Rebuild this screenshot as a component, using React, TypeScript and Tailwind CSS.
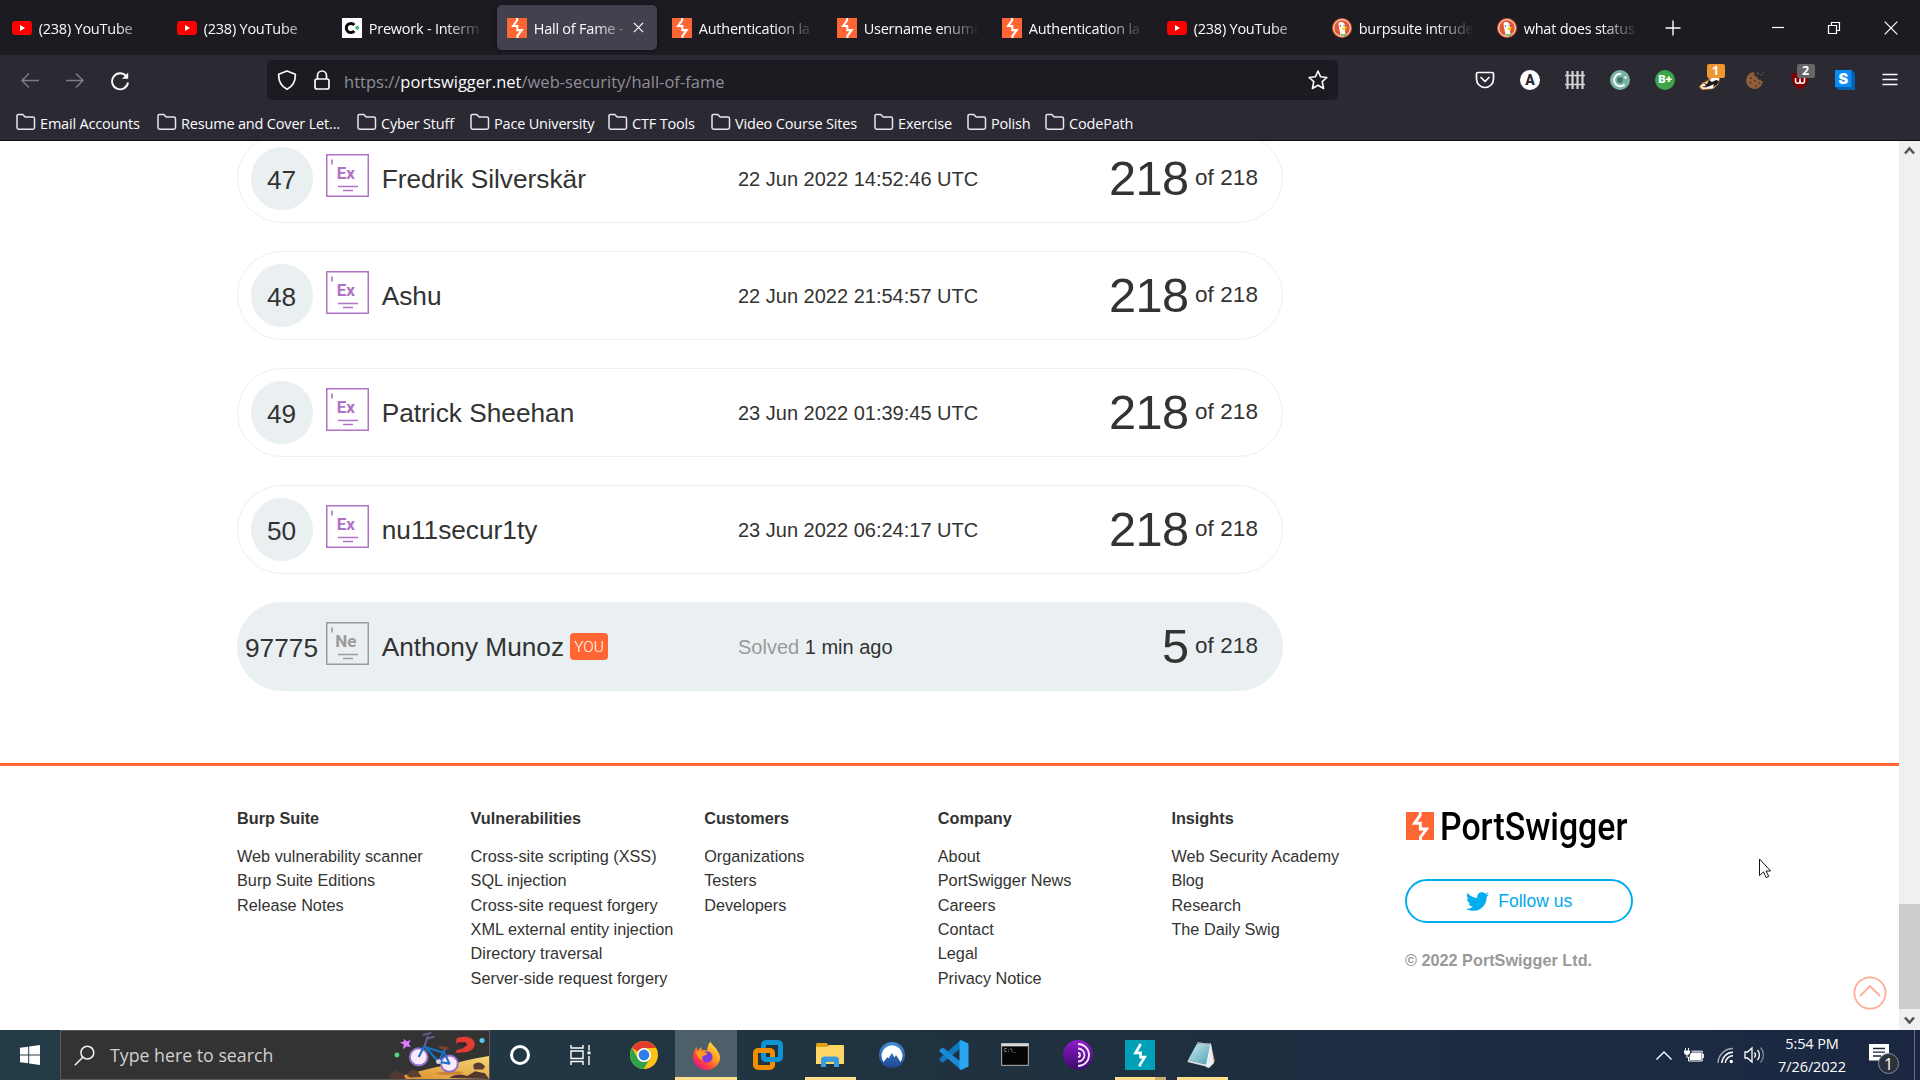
import type { ReactNode } from "react";
import { FaTwitter } from "react-icons/fa";

/* ---------- favicons ---------- */

function YouTubeIcon() {
  return (
    <svg viewBox="0 0 20 20" className="size-5 shrink-0">
      <rect x="0" y="3" width="20" height="14" rx="3.5" fill="#f00" />
      <path d="M8 7v6l5-3z" fill="#fff" />
    </svg>
  );
}

function CodePathIcon() {
  return (
    <svg viewBox="0 0 20 20" className="size-5 shrink-0">
      <rect width="20" height="20" fill="#fff" />
      <path d="M12.300 6.900A4.600 4.600 0 1 0 12.300 13.100" fill="none" stroke="#0b0b0b" strokeWidth="3" />
      <circle cx="15.200" cy="9.800" r="2" fill="#46b98a" />
    </svg>
  );
}

function Bolt({ bg, size, inset }: { bg: string; size: string; inset?: boolean }) {
  return (
    <svg viewBox="0 0 28 28" className={`${size} shrink-0`}>
      <rect width="28" height="28" fill={bg} />
      {inset ? (
        <path d="M14 3.500V5L9.800 12h4.700v4h3.900L14 23v1.800" fill="none" stroke="#fff" strokeWidth="2.500" />
      ) : (
        <path d="M14.200 0v3.200L8.500 11.300h5.900v5.700h6.200L14.600 25v3" fill="none" stroke="#fff" strokeWidth="2.900" />
      )}
    </svg>
  );
}

function DuckIcon() {
  return (
    <svg viewBox="0 0 20 20" className="size-5 shrink-0">
      <circle cx="10" cy="10" r="10" fill="#de5833" />
      <circle cx="10" cy="10" r="8.300" fill="none" stroke="#fff" strokeWidth="0.900" />
      <path d="M6.500 6.200C6.300 4.500 8 3.600 9.700 4c2.400.5 3.300 2 3.300 4.200 0 2.500-.4 4 .2 5.800.4 1.400.4 2.600.2 3.500-1.600.7-3.400.8-4.800.4C8.300 15 7 9.500 6.500 6.200z" fill="#fff" />
      <circle cx="8.500" cy="8" r="0.800" fill="#2d4f8e" />
      <circle cx="12" cy="7.600" r="0.700" fill="#2d4f8e" />
      <path d="M10.200 9.800c1.600-.8 3.800-.8 5-.4-.6.900-2 1.100-2.600 1.400.9.200 1.600.2 2 .4-1.100 1-4 .9-4.400 0z" fill="#fdd20a" />
      <path d="M9 15.500l2.500 1 2.600-1v3l-2.600-.7-2.300.8z" fill="#65bc46" />
    </svg>
  );
}

/* ---------- tab strip ---------- */

type Tab = { icon: ReactNode; title: string; active?: boolean };

const tabs: Tab[] = [
  { icon: <YouTubeIcon />, title: "(238) YouTube" },
  { icon: <YouTubeIcon />, title: "(238) YouTube" },
  { icon: <CodePathIcon />, title: "Prework - Interm" },
  { icon: <Bolt bg="#ff6633" size="size-5" />, title: "Hall of Fame -", active: true },
  { icon: <Bolt bg="#ff6633" size="size-5" />, title: "Authentication la" },
  { icon: <Bolt bg="#ff6633" size="size-5" />, title: "Username enume" },
  { icon: <Bolt bg="#ff6633" size="size-5" />, title: "Authentication la" },
  { icon: <YouTubeIcon />, title: "(238) YouTube" },
  { icon: <DuckIcon />, title: "burpsuite intrude" },
  { icon: <DuckIcon />, title: "what does status" },
];

function TabStrip() {
  return (
    <div className="flex h-[55px] shrink-0 items-center bg-[#1c1b22] pl-[2.200px] text-[#fbfbfe]">
      <div className="flex gap-[5px]">
        {tabs.map((t, i) => (
          <div
            key={i}
            className={`flex h-[45px] w-[160px] items-center rounded-[5px] pl-[10px] pr-[8px] ${t.active ? "bg-[#42414d] shadow-[0_0_4px_rgba(0,0,0,0.5)]" : ""}`}
          >
            {t.icon}
            <div className="ml-[6.500px] flex-1 overflow-hidden whitespace-nowrap pt-[2px] text-[14.500px] tracking-[-0.230px] [mask-image:linear-gradient(to_left,transparent,#000_38px)]">
              {t.title}
            </div>
            {t.active && (
              <svg viewBox="0 0 12 12" className="mr-[5px] size-[11px]" stroke="#fbfbfe" strokeWidth="1.300">
                <path d="M1 1l10 10M11 1L1 11" />
              </svg>
            )}
          </div>
        ))}
      </div>
      <svg viewBox="0 0 16 16" className="ml-[18px] size-4" stroke="#fbfbfe" strokeWidth="1.400">
        <path d="M8 .5v15M.5 8h15" />
      </svg>
      <div className="ml-auto flex pr-[0.700px]">
        <div className="flex w-[57px] justify-center">
          <svg viewBox="0 0 14 14" className="size-[14px]" stroke="#fff" strokeWidth="1.200">
            <path d="M1 6.500h12" />
          </svg>
        </div>
        <div className="flex w-[56px] justify-center">
          <svg viewBox="0 0 14 14" className="size-[14px]" stroke="#fff" strokeWidth="1.200" fill="none">
            <path d="M1.500 4.500h8v8h-8zM4.500 4.500v-3h8v8h-3" />
          </svg>
        </div>
        <div className="flex w-[57px] justify-center">
          <svg viewBox="0 0 14 14" className="size-[14px]" stroke="#fff" strokeWidth="1.200">
            <path d="M.7.7l12.600 12.600M13.300.7L.7 13.300" />
          </svg>
        </div>
      </div>
    </div>
  );
}

/* ---------- navigation toolbar ---------- */

function Cell({ children }: { children: ReactNode }) {
  return <div className="relative flex h-[50px] w-[45px] items-center justify-center">{children}</div>;
}

function CountBadge({ n, color }: { n: string; color: string }) {
  return (
    <span className={`absolute left-[19px] top-[9px] flex h-[14px] w-[18px] items-center justify-center rounded-[2px] font-['Open_Sans'] text-[12.500px] font-bold leading-none text-white ${color}`}>
      {n}
    </span>
  );
}

function NavBar() {
  return (
    <div className="flex h-[50px] shrink-0 items-center bg-[#2b2a33] pl-[7.500px] pr-[7.500px]">
      <Cell>
        <svg viewBox="0 0 20 20" className="size-5" fill="none" stroke="#7d7c84" strokeWidth="1.500">
          <path d="M19 10.500H2M9 3.500l-7 7 7 7" />
        </svg>
      </Cell>
      <Cell>
        <svg viewBox="0 0 20 20" className="size-5" fill="none" stroke="#7d7c84" strokeWidth="1.500">
          <path d="M1 10.500h17M11 3.500l7 7-7 7" />
        </svg>
      </Cell>
      <Cell>
        <svg viewBox="0 0 20 20" className="mt-px size-5" fill="none" stroke="#fbfbfe" strokeWidth="1.900">
          <path d="M16.500 5.500A8 8 0 1 0 18 11.500" />
          <path d="M18.200 1.500v6.200H12z" fill="#fbfbfe" stroke="none" />
        </svg>
      </Cell>
      <div className="ml-[124.500px] flex h-10 w-[1071px] items-center rounded-[5px] bg-[#1c1b22] pl-[10px] pr-[10px]">
        <svg viewBox="0 0 20 20" className="size-5" fill="none" stroke="#fbfbfe" strokeWidth="1.700" strokeLinejoin="round">
          <path d="M10 1l8.300 3.200c.3 6.800-2 12-8.300 15-6.300-3-8.600-8.200-8.300-15z" />
        </svg>
        <svg viewBox="0 0 20 20" className="ml-[15px] size-5" fill="none" stroke="#fbfbfe" strokeWidth="1.700">
          <rect x="3" y="9" width="14" height="10" rx="2" />
          <path d="M5.500 9V5.500a4.500 4.500 0 0 1 9 0V9" />
        </svg>
        <div className="ml-[12px] flex-1 pt-[5px] text-[16.500px] tracking-[0.010px] text-[#8f8f95]">
          https://<span className="text-[#fbfbfe]">portswigger.net</span>/web-security/hall-of-fame
        </div>
        <svg viewBox="0 0 20 20" className="size-5" fill="none" stroke="#fbfbfe" strokeWidth="1.600" strokeLinejoin="round">
          <path d="M10 1l2.600 5.800 6.300.7-4.700 4.200 1.400 6.800L10 15.200l-5.600 3.300 1.400-6.800L1.100 7.500l6.300-.7z" />
        </svg>
      </div>
      <div className="ml-auto flex">
        <Cell>
          <svg viewBox="0 0 20 20" className="size-5" fill="none" stroke="#fbfbfe" strokeWidth="1.700" strokeLinecap="round" strokeLinejoin="round">
            <path d="M3 2.500h14a1.500 1.500 0 0 1 1.500 1.500v5a8.500 8.500 0 0 1-17 0V4A1.500 1.500 0 0 1 3 2.500z" />
            <path d="M6 7.500l4 4 4-4" />
          </svg>
        </Cell>
        <Cell>
          <div className="flex size-5 items-center justify-center rounded-full bg-white font-['Roboto'] text-[14px] font-black leading-none text-[#2b2a33]">
            A
          </div>
        </Cell>
        <Cell>
          <svg viewBox="0 0 20 20" className="size-5" stroke="#d2d2d2">
            <path d="M2.500 1v18M7.500 1v18M12.500 1v18M17.500 1v18" strokeWidth="2.200" />
            <path d="M0 5.500h20M0 14.500h20" strokeWidth="1.500" />
          </svg>
        </Cell>
        <Cell>
          <svg viewBox="0 0 20 20" className="size-5" fill="none">
            <circle cx="10" cy="10" r="10" fill="#7bb5a3" />
            <path d="M10.500 3.800A6.200 6.200 0 1 0 14 15" stroke="#fff" strokeWidth="2" strokeLinecap="round" />
            <circle cx="10" cy="10" r="3" fill="#46786a" />
            <circle cx="15.500" cy="7.500" r="1.200" fill="#fff" />
          </svg>
        </Cell>
        <Cell>
          <div className="flex size-5 items-center justify-center rounded-full bg-[#3da449] font-['Roboto'] text-[11.500px] font-black leading-none text-white">
            B+
          </div>
        </Cell>
        <Cell>
          <svg viewBox="0 0 22 20" className="h-5 w-[22px]">
            <path d="M0 17l3-4 6-3 3-6h7l2 5-2 6-5 4-11 1z" fill="#d9812f" />
            <path d="M1 16.500l4-3 6-3 3-5h5l1 4-2 5-5 4-9 .5z" fill="#fff" />
            <path d="M5 13l3 1 2-4 3 2 4-2 3 1-2 4-4 2 1-3-4 2-3 1z" fill="#1b1b1b" />
            <path d="M2 17l5-1.500 1 2z" fill="#3a2a1c" />
          </svg>
          <CountBadge n="1" color="bg-[#ee9631]" />
        </Cell>
        <Cell>
          <svg viewBox="0 0 20 20" className="size-5">
            <path d="M9 2a8.500 8.500 0 1 0 9 9c-1.500.5-2.500-.5-2.500-1.500-2 .5-3.500-.5-3-2.500C10 7 9 4 9 2z" fill="#8d5f3c" />
            <g fill="#5b3820">
              <circle cx="6" cy="8" r="1.100" />
              <circle cx="10" cy="11" r="1.100" />
              <circle cx="5.500" cy="13" r="1" />
              <circle cx="11" cy="16" r="1" />
              <circle cx="14.500" cy="13" r="0.900" />
            </g>
            <g fill="#8d5f3c">
              <circle cx="13" cy="3.500" r="0.900" />
              <circle cx="16.500" cy="5" r="0.800" />
              <circle cx="18" cy="2.500" r="0.600" />
            </g>
          </svg>
        </Cell>
        <Cell>
          <svg viewBox="0 0 20 20" className="size-5">
            <path d="M10 1c3 2 6 2.500 8.500 2.500 0 7-.5 12-8.500 16C2 15.500 1.500 10.500 1.500 3.500 4 3.500 7 3 10 1z" fill="#800000" />
            <path d="M5.500 8v3a2.200 2.200 0 0 0 4.500 0V8.500M10 11a2.200 2.200 0 0 0 4.500 0V8" fill="none" stroke="#fff" strokeWidth="1.500" />
          </svg>
          <CountBadge n="2" color="bg-[#666]" />
        </Cell>
        <Cell>
          <svg viewBox="0 0 20 20" className="size-5">
            <path d="M16.500 0L20 3.500V20H3.500L0 16.500z" fill="#0561b0" />
            <rect width="16.500" height="17" fill="#0a8cf5" />
            <text x="8.300" y="13.600" textAnchor="middle" fontFamily="Inter, sans-serif" fontWeight="900" fontSize="14.500" fill="#fff">
              S
            </text>
          </svg>
        </Cell>
        <Cell>
          <svg viewBox="0 0 16 14" className="h-[14px] w-4" stroke="#fbfbfe" strokeWidth="1.500">
            <path d="M.5 1.500h15M.5 6.500h15M.5 11.500h15" />
          </svg>
        </Cell>
      </div>
    </div>
  );
}

/* ---------- bookmarks ---------- */

const bookmarks: [string, string][] = [
  ["Email Accounts", "w-[141px]"],
  ["Resume and Cover Let...", "w-[200px]"],
  ["Cyber Stuff", "w-[113px]"],
  ["Pace University", "w-[138px]"],
  ["CTF Tools", "w-[103px]"],
  ["Video Course Sites", "w-[163px]"],
  ["Exercise", "w-[93px]"],
  ["Polish", "w-[78px]"],
  ["CodePath", "w-[100px]"],
];

function BookmarksBar() {
  return (
    <div className="flex h-[36px] shrink-0 items-center border-b border-[#0c0c0d] bg-[#2b2a33] pl-[16px] text-[#fbfbfe]">
      {bookmarks.map(([name, w]) => (
        <div key={name} className={`flex items-center gap-[4px] whitespace-nowrap ${w}`}>
          <svg viewBox="0 0 20 18" className="-mt-px h-[18px] w-5 shrink-0" fill="none" stroke="#e6e6ea" strokeWidth="1.500" strokeLinejoin="round">
            <path d="M1 2.800A1.300 1.300 0 0 1 2.300 1.500h4.500l2.400 2.600h7.600a1.700 1.700 0 0 1 1.700 1.700v8.700a1.700 1.700 0 0 1-1.700 1.700H2.700A1.700 1.700 0 0 1 1 14.500z" />
          </svg>
          <span className="pt-[3px] text-[14.500px] tracking-[-0.180px]">{name}</span>
        </div>
      ))}
    </div>
  );
}

/* ---------- hall of fame ---------- */

function LevelBadge({ code, color }: { code: string; color: string }) {
  return (
    <svg viewBox="0 0 43 43" className="-mt-[6px] size-[43px] shrink-0">
      <rect x="0.750" y="0.750" width="41.500" height="41.500" fill="none" stroke={color} strokeWidth="1.500" />
      <path d="M6 5.500v5" stroke={color} strokeWidth="1.600" />
      <text x="19.800" y="24.800" textAnchor="middle" fontFamily="Roboto, sans-serif" fontWeight="700" fontSize="17" fill={color}>
        {code}
      </text>
      <path d="M12 32.500h20M17 36.500h10" stroke={color} strokeWidth="1.600" />
    </svg>
  );
}

type Entry = { rank: string; name: string; date: ReactNode; solved: string; you?: boolean };

const entries: Entry[] = [
  { rank: "47", name: "Fredrik Silverskär", date: "22 Jun 2022 14:52:46 UTC", solved: "218" },
  { rank: "48", name: "Ashu", date: "22 Jun 2022 21:54:57 UTC", solved: "218" },
  { rank: "49", name: "Patrick Sheehan", date: "23 Jun 2022 01:39:45 UTC", solved: "218" },
  { rank: "50", name: "nu11secur1ty", date: "23 Jun 2022 06:24:17 UTC", solved: "218" },
  {
    rank: "97775",
    name: "Anthony Munoz",
    date: (
      <>
        <span className="text-[#999]">Solved</span> 1 min ago
      </>
    ),
    solved: "5",
    you: true,
  },
];

function Row({ e }: { e: Entry }) {
  return (
    <div
      className={`flex h-[89px] w-[1046px] items-center rounded-full border border-[#eaf0f2] pl-[13px] pr-[24px] ${e.you ? "bg-[#eaf0f2]" : "bg-white"}`}
    >
      <div className="flex h-[63px] w-[62px] shrink-0 items-center justify-center rounded-full bg-[#eaf0f2] pr-px pt-[2px] text-[26.250px] leading-[30px]">
        {e.rank}
      </div>
      <div className="ml-[13px] flex w-[412px] shrink-0 items-center">
        <LevelBadge code={e.you ? "Ne" : "Ex"} color={e.you ? "#9b9b9b" : "#b072c6"} />
        <span className="ml-[12.700px] pt-px text-[26.250px] leading-[29px]">{e.name}</span>
        {e.you && (
          <span className="ml-[6px] flex h-[27px] w-[38px] items-center justify-center rounded-[4px] bg-[#ff6633] pt-[2px] font-['Roboto'] text-[15.500px] font-light leading-none text-white">
            YOU
          </span>
        )}
      </div>
      <div className="flex-1 whitespace-nowrap text-[20px]">{e.date}</div>
      <div className="flex items-center gap-[6.500px] pb-px">
        <span className="text-[48.750px] leading-none tracking-[-0.600px]">{e.solved}</span>
        <span className="text-[22.500px] tracking-[0.080px]">of 218</span>
      </div>
    </div>
  );
}

/* ---------- footer ---------- */

const columns: [string, string[]][] = [
  ["Burp Suite", ["Web vulnerability scanner", "Burp Suite Editions", "Release Notes"]],
  [
    "Vulnerabilities",
    [
      "Cross-site scripting (XSS)",
      "SQL injection",
      "Cross-site request forgery",
      "XML external entity injection",
      "Directory traversal",
      "Server-side request forgery",
    ],
  ],
  ["Customers", ["Organizations", "Testers", "Developers"]],
  ["Company", ["About", "PortSwigger News", "Careers", "Contact", "Legal", "Privacy Notice"]],
  ["Insights", ["Web Security Academy", "Blog", "Research", "The Daily Swig"]],
];

function Footer() {
  return (
    <footer className="relative mt-[72px] flex h-[267px] border-t-[3px] border-[#ff6633] pl-[237px] pt-[40px] text-[16.250px] leading-[24.400px]">
      {columns.map(([title, links]) => (
        <div key={title} className="w-[233.600px] whitespace-nowrap">
          <div className="mb-[13.300px] font-bold">{title}</div>
          {links.map((l) => (
            <div key={l}>{l}</div>
          ))}
        </div>
      ))}
      <div className="flex w-[228px] flex-col">
        <div className="mt-[6px] flex h-[30px] items-start pl-px">
          <Bolt bg="#ff6633" size="size-[28px]" />
          <span className="ml-[6.500px] mt-px origin-left scale-x-[0.868] whitespace-nowrap font-['Roboto'] text-[39px] font-medium leading-[28px] text-black">
            PortSwigger
          </span>
        </div>
        <div className="mt-[37px] flex h-[44px] items-center justify-center gap-[9.500px] rounded-full border-2 border-[#00aeef] text-[17.500px] text-[#00a8ea]">
          <FaTwitter className="size-[23px] text-[#00aeef]" />
          Follow us
        </div>
        <div className="mt-[25px] whitespace-nowrap font-bold text-[#999]">© 2022 PortSwigger Ltd.</div>
      </div>
      <svg viewBox="0 0 34 34" className="absolute right-[12px] top-[210px] size-[34px]" fill="none" stroke="#ffad94" strokeWidth="1.800">
        <circle cx="17" cy="17" r="15.600" />
        <path d="M7 20l10-10 10 10" />
      </svg>
      <svg viewBox="0 0 14 21" className="absolute left-[1758px] top-[92px] h-[21px] w-[14px]">
        <path d="M1.500 1v16.500l4-3.600 2.600 5.700 2.600-1.200-2.600-5.400h4.500z" fill="#fff" stroke="#111" strokeWidth="1" />
      </svg>
    </footer>
  );
}

function Scrollbar() {
  return (
    <div className="flex w-[21px] shrink-0 flex-col items-center bg-[#f0f0f0]">
      <svg viewBox="0 0 21 21" className="size-[21px]" fill="none" stroke="#555" strokeWidth="2.600">
        <path d="M6 12.500l4.500-5 4.500 5" />
      </svg>
      <div className="mt-auto h-[105px] w-full bg-[#cdcdcd]" />
      <svg viewBox="0 0 21 21" className="size-[21px]" fill="none" stroke="#555" strokeWidth="2.600">
        <path d="M6 8.500l4.500 5 4.500-5" />
      </svg>
    </div>
  );
}

/* ---------- taskbar ---------- */

function BikeArt() {
  return (
    <svg viewBox="0 0 100 50" className="ml-auto h-[48px] w-[99px]" preserveAspectRatio="none">
      <defs>
        <linearGradient id="sand" x1="0" x2="1" y1="1" y2="0">
          <stop offset="0" stopColor="#d98b2c" />
          <stop offset="1" stopColor="#f7d774" />
        </linearGradient>
      </defs>
      <path d="M0 48c20-2 30-7 45-10 20-4 35-9 55-12v24H0z" fill="url(#sand)" />
      <path d="M45 44c12-3 22-2 30-1-8 3-20 4-30 1z" fill="#b86a20" opacity=".6" />
      <path d="M0 46l5-5 8 3 3 6H0z" fill="#54382f" />
      <path d="M17 46c2-5 7-7 11-4l4 6-12 .5z" fill="#5d4034" />
      <path d="M84 36c2-4 8-5 12 1l-2 3H85z" fill="#5a3c31" />
      <path d="M60 49c6-5 13-4 18-2l8-5 10 2 4 6z" fill="#54382f" />
      <circle cx="29" cy="27" r="9" fill="#fbe9fa" stroke="#8b6fc9" strokeWidth="2" />
      <circle cx="60" cy="34" r="8.500" fill="#fbe9fa" stroke="#8b6fc9" strokeWidth="2" />
      <path d="M29 27l6-12M35 16l14 16 7-14M36 17l19 6 5 11-11-2" fill="none" stroke="#1673c8" strokeWidth="2.200" strokeLinejoin="round" />
      <path d="M35 15l3-9M34 4l7-2M38 8l6-2" fill="none" stroke="#6d5c96" strokeWidth="2" strokeLinecap="round" />
      <path d="M51 17l7 1" stroke="#7b3f2c" strokeWidth="3" strokeLinecap="round" />
      <circle cx="49" cy="32" r="2.500" fill="#d6d9e2" />
      <path d="M67 8c5-3 15-3 18 3 2 5-1 9-7 11l-11 1v-3l7-2 2-3-9-2z" fill="#e23d2e" />
      <path d="M68 12l8-.5 2 3-2 2-7-2z" fill="#3b2230" />
      <path d="M14 8l3 3 4-2-2 4 2 4-4-1-4 3 1-5-4-2 4-1z" fill="#e07bff" />
      <ellipse cx="7" cy="25" rx="2.500" ry="2.600" fill="#4cdb74" />
      <circle cx="93" cy="10" r="2.600" fill="#57c8f0" />
    </svg>
  );
}

function Chrome() {
  return (
    <svg viewBox="0 0 28 28" className="size-7">
      <circle cx="14" cy="14" r="14" fill="#fbc116" />
      <path d="M1.900 7A14 14 0 0 1 26.100 7H14a7 7 0 0 0-6 3.500z" fill="#e33b2e" />
      <path d="M1.900 7A14 14 0 0 0 13.500 28l6.500-10.500a7 7 0 0 1-12.200 0z" fill="#2ba24c" />
      <circle cx="14" cy="14" r="7" fill="#fff" />
      <circle cx="14" cy="14" r="5.400" fill="#2f7de9" />
    </svg>
  );
}

function Firefox() {
  return (
    <svg viewBox="0 0 30 30" className="size-[29px]">
      <defs>
        <linearGradient id="fox" x1="0.900" x2="0.200" y1="0.100" y2="0.950">
          <stop offset="0" stopColor="#ffe94a" />
          <stop offset="0.400" stopColor="#ff9a1f" />
          <stop offset="0.750" stopColor="#ff3f3f" />
          <stop offset="1" stopColor="#e01592" />
        </linearGradient>
      </defs>
      <path d="M19 .5c1 3 3.500 4 5 6.500 1 .2 1.500 1.500 1.800 2.500C28 12 29 15 29 17a14 13 0 0 1-28 0c0-4 1.500-8 4-11 0 2 .5 3 1 3.500C7.500 8 8.500 7 9.500 6.500c0 1.500.5 2.500 1.500 3 2-.5 3.500 0 4.500.5C16 6 17 3 19 .5z" fill="url(#fox)" />
      <circle cx="15.500" cy="16.500" r="5.800" fill="#7a3bd8" />
      <path d="M4 11c4-1.500 8 0 12 2-1 2-3.500 2-5 3-1 1-.5 3 1 4-4-.5-7-4-8-9z" fill="#ff9b20" />
    </svg>
  );
}

function VMware() {
  return (
    <svg viewBox="0 0 30 30" className="size-[30px]" fill="none" strokeWidth="5">
      <rect x="10.500" y="2.500" width="17" height="17" rx="2.500" stroke="#0f93d2" />
      <rect x="2.500" y="10.500" width="17" height="17" rx="2.500" stroke="#f28c00" />
      <path d="M10.500 13v4a2.500 2.500 0 0 0 2.500 2.500h9" stroke="#0f93d2" />
    </svg>
  );
}

function Explorer() {
  return (
    <svg viewBox="0 0 28 24" className="h-6 w-7">
      <path d="M0 1.500A1.500 1.500 0 0 1 1.500 0H11l2 4h-13z" fill="#e0a013" />
      <path d="M0 4h11l2-2h14a1 1 0 0 1 1 1v18H0z" fill="#ffd766" />
      <path d="M5 24v-8a3 3 0 0 1 3-2.500h12a3 3 0 0 1 3 2.500v8h-5v-5h-8v5z" fill="#3c9be0" />
    </svg>
  );
}

function NordVpn() {
  return (
    <svg viewBox="0 0 26 26" className="size-[26px]">
      <defs>
        <linearGradient id="nord" x1="0" x2="0" y1="0" y2="1">
          <stop offset="0" stopColor="#3f8fdc" />
          <stop offset="1" stopColor="#1f4690" />
        </linearGradient>
      </defs>
      <circle cx="13" cy="13" r="13" fill="url(#nord)" />
      <path d="M4.500 20A10.500 10.500 0 1 1 21.500 20l-4.500-7-1.500 2.500L13 11l-3.500 5.500L8.500 15z" fill="#fff" />
    </svg>
  );
}

function VsCode() {
  return (
    <svg viewBox="0 0 30 30" className="size-[30px]">
      <path d="M22 0v8L4 22.500.5 20.500v-2z" fill="#0f78be" />
      <path d="M22 30v-8L4 7.500.5 9.500v2z" fill="#1a8ad4" />
      <path d="M22 0l7.500 3.500v23L22 30l-1.500-1V1z" fill="#2aa5f4" />
    </svg>
  );
}

function Terminal() {
  return (
    <svg viewBox="0 0 28 23" className="mb-px mr-[2px] h-[23px] w-7">
      <rect width="28" height="23" fill="#9b9b9b" />
      <rect x="0.500" y="0.500" width="27" height="2.500" fill="#d9d9d9" />
      <rect x="1.200" y="3.500" width="25.600" height="18.300" fill="#050505" />
      <text x="3" y="9" fontFamily="'Liberation Mono', monospace" fontSize="5" fill="#ddd">
        C:\_
      </text>
    </svg>
  );
}

function Tor() {
  return (
    <svg viewBox="0 0 30 30" className="size-[30px]" fill="none">
      <defs>
        <linearGradient id="tor" x1="0" x2="0" y1="0" y2="1">
          <stop offset="0" stopColor="#8f1ccc" />
          <stop offset="1" stopColor="#3b0a68" />
        </linearGradient>
      </defs>
      <circle cx="15" cy="15" r="15" fill="url(#tor)" />
      <path d="M15 4a11 11 0 0 1 0 22M15 8.500a6.500 6.500 0 0 1 0 13M15 13a2 2 0 0 1 0 4" stroke="#f3e4fb" strokeWidth="1.800" />
    </svg>
  );
}

function Notepad() {
  return (
    <svg viewBox="0 0 28 28" className="mr-[2px] size-7">
      <defs>
        <linearGradient id="pad" x1="0" x2="1" y1="0" y2="1">
          <stop offset="0" stopColor="#cdeef3" />
          <stop offset="1" stopColor="#4f9fb2" />
        </linearGradient>
      </defs>
      <path d="M24 4l4 16-6 6z" fill="#b98b57" />
      <path d="M12 3l12-.5 3 19.500-5 5-3-1z" fill="#e9eef0" />
      <path d="M10 2.500L23 4.500l-4 19L1 19z" fill="url(#pad)" />
      <path d="M1 19l18 4.500v2L.5 21z" fill="#d8e2e5" />
      <path d="M10 2.500l13 2 .4-1.500L10.500 1z" fill="#a8b4b8" />
    </svg>
  );
}

type AppEntry = { icon: ReactNode; active?: boolean; open?: boolean; stacked?: boolean };

const apps: AppEntry[] = [
  { icon: <Chrome /> },
  { icon: <Firefox />, active: true },
  { icon: <VMware /> },
  { icon: <Explorer />, open: true },
  { icon: <NordVpn /> },
  { icon: <VsCode /> },
  { icon: <Terminal /> },
  { icon: <Tor /> },
  { icon: <Bolt bg="#00a0b8" size="size-[30px]" inset />, open: true, stacked: true },
  { icon: <Notepad />, open: true },
];

function Taskbar() {
  return (
    <div className="flex h-[50px] shrink-0 bg-[linear-gradient(90deg,#233c47_0%,#20323f_50%,#1d2c42_75%,#1b2741_100%)] text-white">
      <div className="flex w-[60px] items-center justify-center">
        <svg viewBox="0 0 20 20" className="size-5" fill="#fff">
          <path d="M0 2.800l8.200-1.100v7.800H0zM9.200 1.500L20 0v9.500H9.200zM0 10.500h8.200v7.800L0 17.200zM9.200 10.500H20V20L9.200 18.500z" />
        </svg>
      </div>
      <div className="flex w-[430px] items-center border border-[#5a5a5a] bg-[#333] pl-[13px]">
        <svg viewBox="0 0 22 22" className="size-[21px]" fill="none" stroke="#f2f2f2" strokeWidth="1.600">
          <circle cx="14" cy="8" r="6.700" />
          <path d="M9.200 12.800L.8 21.200" />
        </svg>
        <span className="ml-[15px] text-[17.750px] text-[#d0d0d0]">Type here to search</span>
        <BikeArt />
      </div>
      <div className="flex w-[59px] items-center justify-center">
        <div className="size-[20px] rounded-full border-[3px] border-white" />
      </div>
      <div className="flex w-[64px] items-center pl-[21px]">
        <svg viewBox="0 0 22 20" className="h-5 w-[22px]" fill="none" stroke="#fff" strokeWidth="1.400">
          <path d="M1 0v3h12V0M1 20v-3.500h12V20M1 6h12v7.500H1zM19 0v5.500M19 11v9" />
          <path d="M17.500 6.500h3v2.800h-3z" fill="#fff" stroke="none" />
        </svg>
      </div>
      {apps.map((a, i) => (
        <div
          key={i}
          className={`relative flex w-[62px] items-center justify-center ${a.active ? "bg-[#4d6069]" : ""}`}
        >
          {a.icon}
          {a.active && <div className="absolute inset-x-0 bottom-0 h-[3px] bg-[#ffdd8c]" />}
          {a.open && <div className={`absolute bottom-0 left-[6px] h-[3px] bg-[#ffdd8c] ${a.stacked ? "w-[40px]" : "w-[51px]"}`} />}
          {a.stacked && <div className="absolute bottom-0 left-[46px] h-[3px] w-[11px] bg-[#c9ad6c]" />}
        </div>
      ))}
      <div className="ml-auto flex items-center">
        <svg viewBox="0 0 16 9" className="h-[9px] w-4" fill="none" stroke="#fff" strokeWidth="1.400">
          <path d="M.5 8.500L8 1l7.500 7.500" />
        </svg>
        <svg viewBox="0 0 20 14" className="ml-[12px] h-[14px] w-5" fill="none" stroke="#fff">
          <path d="M7.500 5h9.500v6.500H6V8z" fill="#fff" stroke="#fff" strokeWidth="1" />
          <path d="M7.500 3.200h10.700v9.800H4.500V9" strokeWidth="1" />
          <path d="M19.200 6v4" strokeWidth="1.400" />
          <path d="M1.500 0v2.500M4.500 0v2.500" strokeWidth="1" />
          <path d="M0 2.500h6V4a3 3 0 0 1-6 0z" fill="#fff" stroke="none" />
          <path d="M3 7v3" strokeWidth="1" />
        </svg>
        <svg viewBox="0 0 17 17" className="ml-[13px] size-[17px]" fill="none" stroke="#fff" strokeWidth="1.400">
          <path d="M1 16A15 15 0 0 1 16 1.500" opacity=".6" />
          <path d="M4.800 16A11.200 11.200 0 0 1 16 5.300M8.300 16A7.700 7.700 0 0 1 16 8.800" />
          <circle cx="14.300" cy="14.500" r="1.700" fill="#fff" stroke="none" />
        </svg>
        <svg viewBox="0 0 21 18" className="ml-[10px] h-[18px] w-[21px]" fill="none" stroke="#fff" strokeWidth="1.300">
          <path d="M1 6h2.500L8 2v14l-4.500-4H1z" />
          <path d="M10.500 6.500a4 4 0 0 1 0 5M13.500 4a7.500 7.500 0 0 1 0 10" />
          <path d="M16.500 1.500a11 11 0 0 1 0 15" opacity=".45" />
        </svg>
        <div className="ml-[12px] w-[70px] text-center text-[14.500px] leading-[23px] tracking-[-0.100px]">
          <div>5:54 PM</div>
          <div>7/26/2022</div>
        </div>
        <div className="relative ml-[22px] mr-[23px] flex size-[22px] items-start">
          <svg viewBox="0 0 20 20" className="h-5 w-5">
            <path d="M0 0h20v16.500h-6L10 20v-3.500H0z" fill="#fff" />
            <path d="M4 4.500h12M4 8.200h12M4 12h8" stroke="#1b2741" strokeWidth="1.300" />
          </svg>
          <span className="absolute left-[9px] top-[9px] flex size-[21px] items-center justify-center rounded-full border border-[#8a8f98] bg-[#2d3139] text-[16px] leading-none">
            1
          </span>
        </div>
        <div className="mr-[5px] h-[50px] w-px bg-[#6a7284]" />
      </div>
    </div>
  );
}

export default function App() {
  return (
    <div className="flex h-[1080px] w-[1920px] flex-col overflow-hidden font-['Open_Sans',sans-serif]">
      <TabStrip />
      <NavBar />
      <BookmarksBar />
      <div className="flex h-[889px] shrink-0 overflow-hidden bg-white font-['Liberation_Sans',Arial,sans-serif] text-[#333332]">
        <main className="w-[1899px] shrink-0">
          <div className="-mt-[7px] flex flex-col gap-[28px] pl-[237px]">
            {entries.map((e) => (
              <Row key={e.rank} e={e} />
            ))}
          </div>
          <Footer />
        </main>
        <Scrollbar />
      </div>
      <Taskbar />
    </div>
  );
}
